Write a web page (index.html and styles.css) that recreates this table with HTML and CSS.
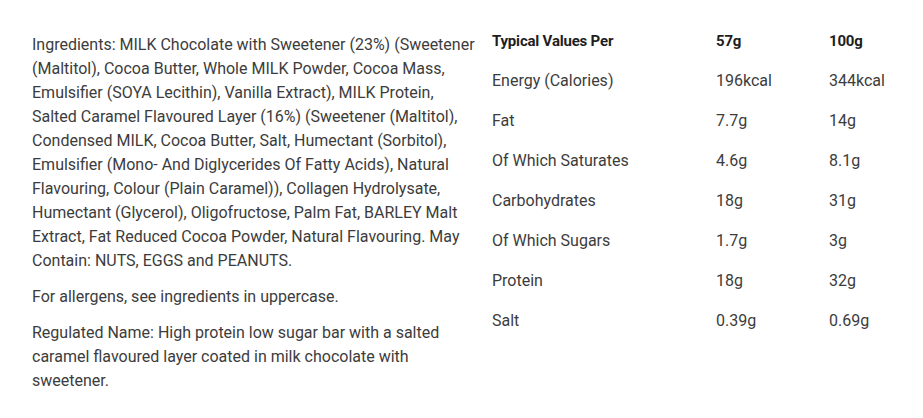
FILE: index.html
```html
<!DOCTYPE html>
<html lang="en">
<head>
<meta charset="utf-8">
<title>Nutrition</title>
<link rel="stylesheet" href="styles.css">
</head>
<body>
<div class="wrap">
  <div class="ingredients">
    <p>Ingredients: MILK Chocolate with Sweetener (23%) (Sweetener (Maltitol), Cocoa Butter, Whole MILK Powder, Cocoa Mass, Emulsifier (SOYA Lecithin), Vanilla Extract), MILK Protein, Salted Caramel Flavoured Layer (16%) (Sweetener (Maltitol), Condensed MILK, Cocoa Butter, Salt, Humectant (Sorbitol), Emulsifier (Mono- And Diglycerides Of Fatty Acids), Natural Flavouring, Colour (Plain Caramel)), Collagen Hydrolysate, Humectant (Glycerol), Oligofructose, Palm Fat, BARLEY Malt Extract, Fat Reduced Cocoa Powder, Natural Flavouring. May Contain: NUTS, EGGS and PEANUTS.</p>
    <p>For allergens, see ingredients in uppercase.</p>
    <p>Regulated Name: High protein low sugar bar with a salted caramel flavoured layer coated in milk chocolate with sweetener.</p>
  </div>
  <table class="nutrition">
    <thead>
      <tr><th>Typical Values Per</th><th>57g</th><th>100g</th></tr>
    </thead>
    <tbody>
      <tr><td>Energy (Calories)</td><td>196kcal</td><td>344kcal</td></tr>
      <tr><td>Fat</td><td>7.7g</td><td>14g</td></tr>
      <tr><td>Of Which Saturates</td><td>4.6g</td><td>8.1g</td></tr>
      <tr><td>Carbohydrates</td><td>18g</td><td>31g</td></tr>
      <tr><td>Of Which Sugars</td><td>1.7g</td><td>3g</td></tr>
      <tr><td>Protein</td><td>18g</td><td>32g</td></tr>
      <tr><td>Salt</td><td>0.39g</td><td>0.69g</td></tr>
    </tbody>
  </table>
</div>
</body>
</html>
```
FILE: styles.css
```css
html, body {
  margin: 0;
  padding: 0;
  background: #ffffff;
}
body {
  font-family: Roboto, "Liberation Sans", sans-serif;
  font-size: 16px;
  color: #3c3c3c;
}
.wrap {
  display: flex;
  align-items: flex-start;
  gap: 14px;
  padding: 21px 20px 0 32px;
}
.ingredients {
  width: 446px;
  flex: none;
  padding-top: 12px;
}
.ingredients p {
  margin: 0 0 12px 0;
  line-height: 24px;
}
.nutrition {
  flex: 1;
  border-collapse: collapse;
}
.nutrition th,
.nutrition td {
  height: 40px;
  padding: 0;
  text-align: left;
  vertical-align: middle;
  line-height: 24px;
}
.nutrition th {
  font-weight: bold;
  font-size: 15px;
  letter-spacing: -0.2px;
  color: #1e1e1e;
}
.nutrition th:first-child,
.nutrition td:first-child {
  width: 224px;
}
.nutrition th:nth-child(2),
.nutrition td:nth-child(2) {
  width: 113px;
}
```
